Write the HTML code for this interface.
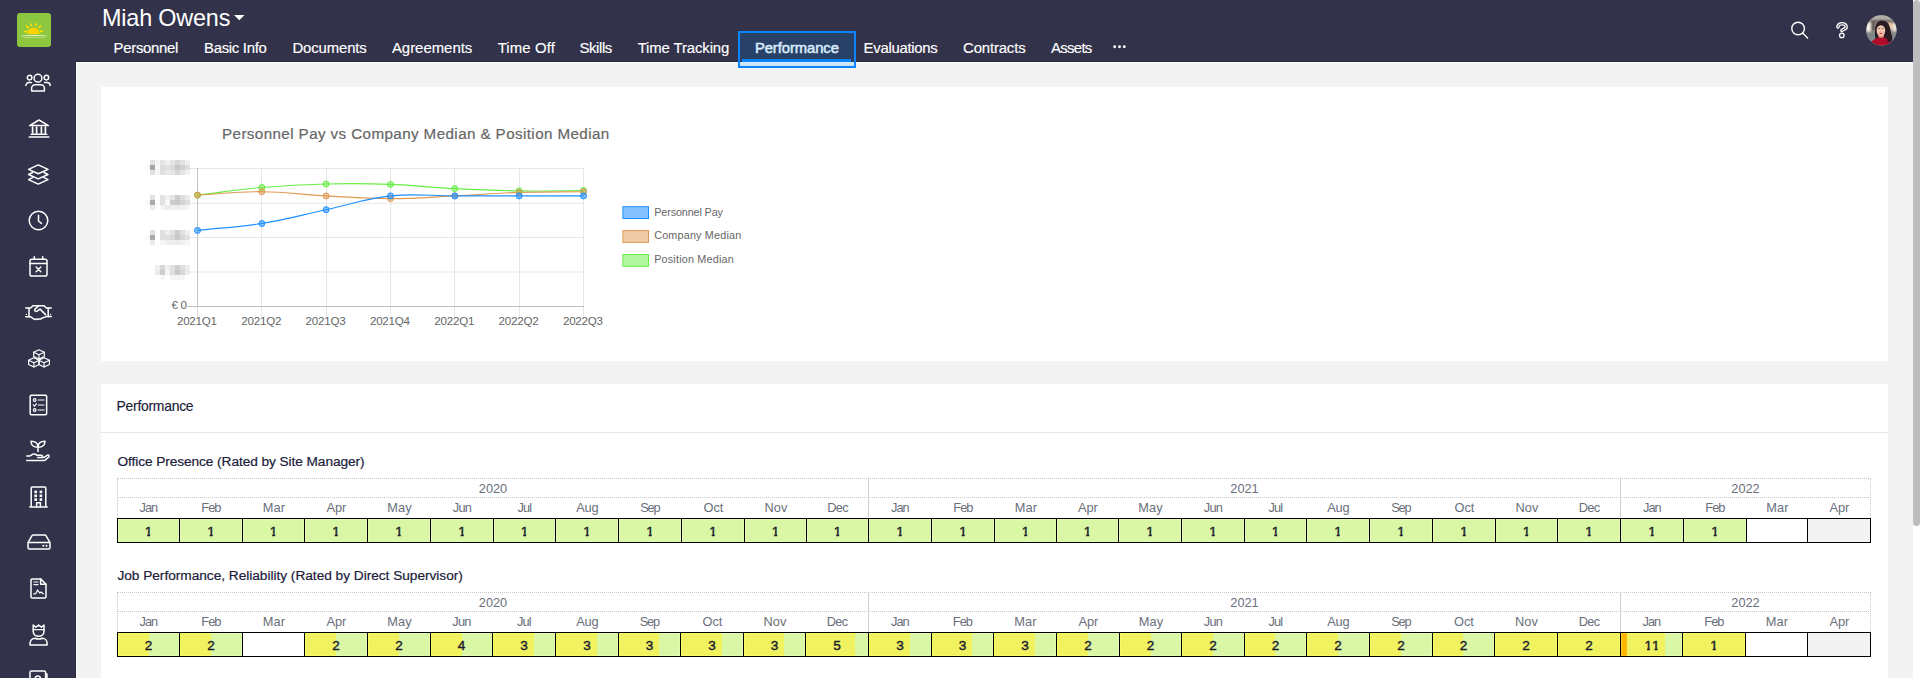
<!DOCTYPE html>
<html lang="en"><head><meta charset="utf-8"><title>Miah Owens - Performance</title>
<style>
html,body{margin:0;padding:0;}
body{width:1920px;height:678px;overflow:hidden;position:relative;background:#f3f3f3;font-family:'Liberation Sans', sans-serif;}
.t{position:absolute;white-space:nowrap;line-height:1em;display:block;}
.abs{position:absolute;}
.o{display:inline-block;font-style:normal;clip-path:polygon(0 0,100% 0,100% 9.3px,5.45px 9.3px,5.45px 100%,2.55px 100%,2.55px 9.3px,0 9.3px);}
#side{left:0;top:0;width:76px;height:678px;background:#32324a;}
#head{left:76px;top:0;width:1837px;height:62px;background:#32324a;}
.card{background:#fff;}
svg{position:absolute;overflow:visible;}
.ic{fill:none;stroke:#fff;stroke-width:1.5;stroke-linecap:round;stroke-linejoin:round;}
</style></head><body>
<div id="frame"><div id="side" class="abs"></div><div id="head" class="abs"></div><div class="abs" style="left:76px;top:62px;width:1px;height:616px;background:#fdfdfd"></div><div class="abs" style="left:76px;top:62px;width:1837px;height:1px;background:#fdfdfd"></div><div class="abs" style="left:75px;top:61px;width:1px;height:617px;background:#2b2b41"></div><div class="abs" style="left:75px;top:61px;width:1838px;height:1px;background:#2b2b41"></div><div class="abs" style="left:1913px;top:0;width:7px;height:678px;background:#fff"></div><div class="abs" style="left:1913px;top:0;width:7px;height:526px;background:#bdbdbd;border-radius:3.5px"></div></div>
<main>
<section id="pay-chart"><div class="abs card" style="left:101px;top:87px;width:1787px;height:274px"></div><svg style="left:0;top:0" width="1920" height="678" viewBox="0 0 1920 678"><path d="M187.5 168.5 H584" stroke="#e6e6e6" stroke-width="1"/><path d="M187.5 203.3 H584" stroke="#e6e6e6" stroke-width="1"/><path d="M187.5 237.5 H584" stroke="#e6e6e6" stroke-width="1"/><path d="M187.5 272 H584" stroke="#e6e6e6" stroke-width="1"/><path d="M197.5 168 V316.5" stroke="#dcdcdc" stroke-width="1"/><path d="M261.5 168 V316.5" stroke="#e6e6e6" stroke-width="1"/><path d="M326.5 168 V316.5" stroke="#e6e6e6" stroke-width="1"/><path d="M390.5 168 V316.5" stroke="#e6e6e6" stroke-width="1"/><path d="M454.5 168 V316.5" stroke="#e6e6e6" stroke-width="1"/><path d="M519.5 168 V316.5" stroke="#e6e6e6" stroke-width="1"/><path d="M583.5 168 V316.5" stroke="#e6e6e6" stroke-width="1"/><path d="M187.5 306.5 H584" stroke="#bfbfbf" stroke-width="1"/><path d="M197.5 168 V306.5" stroke="#c4c4c4" stroke-width="1"/><path d="M197.50 195.10 C223.23 192.06 236.03 189.73 261.83 187.50 C287.50 185.29 300.41 184.62 326.17 184.00 C351.88 183.38 364.79 183.48 390.50 184.40 C416.26 185.32 429.08 187.30 454.83 188.60 C480.55 189.90 493.42 190.52 519.16 190.90 C544.89 191.28 557.76 190.66 583.50 190.50" fill="none" stroke="#66ee44" stroke-width="1.15"/><path d="M197.50 195.10 C223.23 193.74 236.11 191.54 261.83 191.70 C287.58 191.86 300.42 194.52 326.17 195.90 C351.88 197.28 364.77 198.60 390.50 198.60 C416.23 198.60 429.11 197.14 454.83 195.90 C480.57 194.66 493.41 193.24 519.16 192.40 C544.88 191.56 557.76 191.98 583.50 191.70" fill="none" stroke="#e09a55" stroke-width="1.15"/><path d="M197.50 230.40 C223.23 227.64 236.32 227.61 261.83 223.50 C287.78 219.33 300.43 215.22 326.17 209.70 C351.90 204.18 364.48 198.69 390.50 195.90 C415.94 193.17 429.10 195.90 454.83 195.90 C480.57 195.90 493.43 195.90 519.16 195.90 C544.90 195.90 557.76 195.90 583.50 195.90" fill="none" stroke="#1e90ff" stroke-width="1.15"/><circle cx="197.50" cy="195.10" r="3" fill="rgba(102,238,68,0.5)" stroke="#66ee44" stroke-width="1"/><circle cx="261.83" cy="187.50" r="3" fill="rgba(102,238,68,0.5)" stroke="#66ee44" stroke-width="1"/><circle cx="326.17" cy="184.00" r="3" fill="rgba(102,238,68,0.5)" stroke="#66ee44" stroke-width="1"/><circle cx="390.50" cy="184.40" r="3" fill="rgba(102,238,68,0.5)" stroke="#66ee44" stroke-width="1"/><circle cx="454.83" cy="188.60" r="3" fill="rgba(102,238,68,0.5)" stroke="#66ee44" stroke-width="1"/><circle cx="519.16" cy="190.90" r="3" fill="rgba(102,238,68,0.5)" stroke="#66ee44" stroke-width="1"/><circle cx="583.50" cy="190.50" r="3" fill="rgba(102,238,68,0.5)" stroke="#66ee44" stroke-width="1"/><circle cx="197.50" cy="195.10" r="3" fill="rgba(222,150,80,0.5)" stroke="#e09a55" stroke-width="1"/><circle cx="261.83" cy="191.70" r="3" fill="rgba(222,150,80,0.5)" stroke="#e09a55" stroke-width="1"/><circle cx="326.17" cy="195.90" r="3" fill="rgba(222,150,80,0.5)" stroke="#e09a55" stroke-width="1"/><circle cx="390.50" cy="198.60" r="3" fill="rgba(222,150,80,0.5)" stroke="#e09a55" stroke-width="1"/><circle cx="454.83" cy="195.90" r="3" fill="rgba(222,150,80,0.5)" stroke="#e09a55" stroke-width="1"/><circle cx="519.16" cy="192.40" r="3" fill="rgba(222,150,80,0.5)" stroke="#e09a55" stroke-width="1"/><circle cx="583.50" cy="191.70" r="3" fill="rgba(222,150,80,0.5)" stroke="#e09a55" stroke-width="1"/><circle cx="197.50" cy="230.40" r="3" fill="rgba(30,144,255,0.55)" stroke="#1e90ff" stroke-width="1"/><circle cx="261.83" cy="223.50" r="3" fill="rgba(30,144,255,0.55)" stroke="#1e90ff" stroke-width="1"/><circle cx="326.17" cy="209.70" r="3" fill="rgba(30,144,255,0.55)" stroke="#1e90ff" stroke-width="1"/><circle cx="390.50" cy="195.90" r="3" fill="rgba(30,144,255,0.55)" stroke="#1e90ff" stroke-width="1"/><circle cx="454.83" cy="195.90" r="3" fill="rgba(30,144,255,0.55)" stroke="#1e90ff" stroke-width="1"/><circle cx="519.16" cy="195.90" r="3" fill="rgba(30,144,255,0.55)" stroke="#1e90ff" stroke-width="1"/><circle cx="583.50" cy="195.90" r="3" fill="rgba(30,144,255,0.55)" stroke="#1e90ff" stroke-width="1"/><rect x="622.9" y="206.7" width="25.6" height="11.8" fill="rgba(30,144,255,0.55)" stroke="#1e90ff" stroke-width="1"/><rect x="622.9" y="230.6" width="25.6" height="11.8" fill="rgba(222,150,80,0.5)" stroke="#e09a55" stroke-width="1"/><rect x="622.9" y="254.5" width="25.6" height="11.8" fill="rgba(102,238,68,0.5)" stroke="#66ee44" stroke-width="1"/><rect x="150" y="160" width="5" height="5" fill="rgb(225,225,225)"/><rect x="155" y="160" width="5" height="5" fill="rgb(245,245,245)"/><rect x="160" y="160" width="5" height="5" fill="rgb(228,228,228)"/><rect x="165" y="160" width="5" height="5" fill="rgb(240,240,240)"/><rect x="170" y="160" width="5" height="5" fill="rgb(228,228,228)"/><rect x="175" y="160" width="5" height="5" fill="rgb(215,215,215)"/><rect x="180" y="160" width="5" height="5" fill="rgb(225,225,225)"/><rect x="185" y="160" width="5" height="5" fill="rgb(240,240,240)"/><rect x="145" y="165" width="5" height="5" fill="rgb(248,248,248)"/><rect x="150" y="165" width="5" height="5" fill="rgb(165,165,165)"/><rect x="155" y="165" width="5" height="5" fill="rgb(248,248,248)"/><rect x="160" y="165" width="5" height="5" fill="rgb(222,222,222)"/><rect x="165" y="165" width="5" height="5" fill="rgb(225,225,225)"/><rect x="170" y="165" width="5" height="5" fill="rgb(218,218,218)"/><rect x="175" y="165" width="5" height="5" fill="rgb(200,200,200)"/><rect x="180" y="165" width="5" height="5" fill="rgb(210,210,210)"/><rect x="185" y="165" width="5" height="5" fill="rgb(222,222,222)"/><rect x="150" y="170" width="5" height="5" fill="rgb(225,225,225)"/><rect x="155" y="170" width="5" height="5" fill="rgb(245,245,245)"/><rect x="160" y="170" width="5" height="5" fill="rgb(225,225,225)"/><rect x="165" y="170" width="5" height="5" fill="rgb(232,232,232)"/><rect x="170" y="170" width="5" height="5" fill="rgb(230,230,230)"/><rect x="175" y="170" width="5" height="5" fill="rgb(215,215,215)"/><rect x="180" y="170" width="5" height="5" fill="rgb(228,228,228)"/><rect x="185" y="170" width="5" height="5" fill="rgb(240,240,240)"/><rect x="150" y="195" width="5" height="5" fill="rgb(225,225,225)"/><rect x="160" y="195" width="5" height="5" fill="rgb(225,225,225)"/><rect x="165" y="195" width="5" height="5" fill="rgb(240,240,240)"/><rect x="170" y="195" width="5" height="5" fill="rgb(228,228,228)"/><rect x="175" y="195" width="5" height="5" fill="rgb(205,205,205)"/><rect x="180" y="195" width="5" height="5" fill="rgb(222,222,222)"/><rect x="185" y="195" width="5" height="5" fill="rgb(235,235,235)"/><rect x="145" y="200" width="5" height="5" fill="rgb(248,248,248)"/><rect x="150" y="200" width="5" height="5" fill="rgb(170,170,170)"/><rect x="155" y="200" width="5" height="5" fill="rgb(250,250,250)"/><rect x="160" y="200" width="5" height="5" fill="rgb(225,225,225)"/><rect x="165" y="200" width="5" height="5" fill="rgb(248,248,248)"/><rect x="170" y="200" width="5" height="5" fill="rgb(205,205,205)"/><rect x="175" y="200" width="5" height="5" fill="rgb(200,200,200)"/><rect x="180" y="200" width="5" height="5" fill="rgb(212,212,212)"/><rect x="185" y="200" width="5" height="5" fill="rgb(222,222,222)"/><rect x="150" y="205" width="5" height="5" fill="rgb(235,235,235)"/><rect x="160" y="205" width="5" height="5" fill="rgb(245,245,245)"/><rect x="165" y="205" width="5" height="5" fill="rgb(235,235,235)"/><rect x="170" y="205" width="5" height="5" fill="rgb(240,240,240)"/><rect x="175" y="205" width="5" height="5" fill="rgb(238,238,238)"/><rect x="180" y="205" width="5" height="5" fill="rgb(240,240,240)"/><rect x="185" y="205" width="5" height="5" fill="rgb(245,245,245)"/><rect x="150" y="230" width="5" height="5" fill="rgb(225,225,225)"/><rect x="160" y="230" width="5" height="5" fill="rgb(225,225,225)"/><rect x="165" y="230" width="5" height="5" fill="rgb(238,238,238)"/><rect x="170" y="230" width="5" height="5" fill="rgb(225,225,225)"/><rect x="175" y="230" width="5" height="5" fill="rgb(205,205,205)"/><rect x="180" y="230" width="5" height="5" fill="rgb(225,225,225)"/><rect x="185" y="230" width="5" height="5" fill="rgb(238,238,238)"/><rect x="145" y="235" width="5" height="5" fill="rgb(248,248,248)"/><rect x="150" y="235" width="5" height="5" fill="rgb(170,170,170)"/><rect x="160" y="235" width="5" height="5" fill="rgb(222,222,222)"/><rect x="165" y="235" width="5" height="5" fill="rgb(222,222,222)"/><rect x="170" y="235" width="5" height="5" fill="rgb(215,215,215)"/><rect x="175" y="235" width="5" height="5" fill="rgb(200,200,200)"/><rect x="180" y="235" width="5" height="5" fill="rgb(215,215,215)"/><rect x="185" y="235" width="5" height="5" fill="rgb(225,225,225)"/><rect x="150" y="240" width="5" height="5" fill="rgb(235,235,235)"/><rect x="160" y="240" width="5" height="5" fill="rgb(245,245,245)"/><rect x="165" y="240" width="5" height="5" fill="rgb(238,238,238)"/><rect x="170" y="240" width="5" height="5" fill="rgb(238,238,238)"/><rect x="175" y="240" width="5" height="5" fill="rgb(235,235,235)"/><rect x="180" y="240" width="5" height="5" fill="rgb(240,240,240)"/><rect x="185" y="240" width="5" height="5" fill="rgb(245,245,245)"/><rect x="155" y="265" width="5" height="5" fill="rgb(240,240,240)"/><rect x="160" y="265" width="5" height="5" fill="rgb(215,215,215)"/><rect x="165" y="265" width="5" height="5" fill="rgb(240,240,240)"/><rect x="170" y="265" width="5" height="5" fill="rgb(225,225,225)"/><rect x="175" y="265" width="5" height="5" fill="rgb(205,205,205)"/><rect x="180" y="265" width="5" height="5" fill="rgb(222,222,222)"/><rect x="185" y="265" width="5" height="5" fill="rgb(238,238,238)"/><rect x="155" y="270" width="5" height="5" fill="rgb(235,235,235)"/><rect x="160" y="270" width="5" height="5" fill="rgb(205,205,205)"/><rect x="165" y="270" width="5" height="5" fill="rgb(245,245,245)"/><rect x="170" y="270" width="5" height="5" fill="rgb(222,222,222)"/><rect x="175" y="270" width="5" height="5" fill="rgb(200,200,200)"/><rect x="180" y="270" width="5" height="5" fill="rgb(215,215,215)"/><rect x="185" y="270" width="5" height="5" fill="rgb(235,235,235)"/><rect x="160" y="275" width="5" height="5" fill="rgb(248,248,248)"/><rect x="170" y="275" width="5" height="5" fill="rgb(246,246,246)"/><rect x="175" y="275" width="5" height="5" fill="rgb(244,244,244)"/><rect x="180" y="275" width="5" height="5" fill="rgb(246,246,246)"/></svg><span class="t" style="left:222.00px;top:126.00px;font-size:15.2px;color:#666;letter-spacing:0.400px;-webkit-text-stroke:0.2px #666;">Personnel Pay vs Company Median &amp; Position Median</span><span class="t" style="left:176.95px;top:315.00px;font-size:11.6px;color:#666;letter-spacing:-0.233px;">2021Q1</span><span class="t" style="left:241.28px;top:315.00px;font-size:11.6px;color:#666;letter-spacing:-0.233px;">2021Q2</span><span class="t" style="left:305.62px;top:315.00px;font-size:11.6px;color:#666;letter-spacing:-0.233px;">2021Q3</span><span class="t" style="left:369.95px;top:315.00px;font-size:11.6px;color:#666;letter-spacing:-0.233px;">2021Q4</span><span class="t" style="left:434.28px;top:315.00px;font-size:11.6px;color:#666;letter-spacing:-0.233px;">2022Q1</span><span class="t" style="left:498.61px;top:315.00px;font-size:11.6px;color:#666;letter-spacing:-0.233px;">2022Q2</span><span class="t" style="left:562.95px;top:315.00px;font-size:11.6px;color:#666;letter-spacing:-0.233px;">2022Q3</span><span class="t" style="left:171.40px;top:299.00px;font-size:11.6px;color:#666;letter-spacing:-0.263px;">€ 0</span><span class="t" style="left:654.20px;top:207.00px;font-size:10.8px;color:#666;letter-spacing:-0.120px;">Personnel Pay</span><span class="t" style="left:654.20px;top:230.00px;font-size:10.8px;color:#666;letter-spacing:0.183px;">Company Median</span><span class="t" style="left:654.20px;top:254.00px;font-size:10.8px;color:#666;letter-spacing:0.191px;">Position Median</span></section>
<section id="performance"><div class="abs card" style="left:101px;top:384px;width:1787px;height:300px"></div><div class="abs" style="left:101px;top:432px;width:1787px;height:1px;background:#e3e6ea"></div><span class="t" style="left:116.50px;top:400.00px;font-size:13.9px;color:#20203a;letter-spacing:-0.243px;-webkit-text-stroke:0.15px #20203a;">Performance</span><span class="t" style="left:117.40px;top:455.00px;font-size:13.7px;color:#20203a;letter-spacing:-0.075px;-webkit-text-stroke:0.2px #20203a;">Office Presence (Rated by Site Manager)</span><div class="abs" style="left:117px;top:478px;width:1754px;height:0;border-top:1px dotted #c8c8c8"></div><div class="abs" style="left:117px;top:497px;width:1754px;height:0;border-top:1px dotted #c8c8c8"></div><div class="abs" style="left:117px;top:478px;width:0;height:40px;border-left:1px dotted #c8c8c8"></div><div class="abs" style="left:1870px;top:478px;width:0;height:40px;border-left:1px dotted #c8c8c8"></div><div class="abs" style="left:868px;top:478px;width:1px;height:40px;background:#cfcfcf"></div><div class="abs" style="left:1620px;top:478px;width:1px;height:40px;background:#cfcfcf"></div><span class="t" style="left:478.77px;top:483.00px;font-size:12.8px;color:#6a6f7c;">2020</span><span class="t" style="left:1230.27px;top:483.00px;font-size:12.8px;color:#6a6f7c;">2021</span><span class="t" style="left:1731.27px;top:483.00px;font-size:12.8px;color:#6a6f7c;">2022</span><span class="t" style="left:139.60px;top:502.00px;font-size:12.8px;color:#6a6f7c;letter-spacing:-1.020px;">Jan</span><span class="t" style="left:201.30px;top:502.00px;font-size:12.8px;color:#6a6f7c;letter-spacing:-0.931px;">Feb</span><span class="t" style="left:262.65px;top:502.00px;font-size:12.8px;color:#6a6f7c;letter-spacing:0.227px;">Mar</span><span class="t" style="left:326.40px;top:502.00px;font-size:12.8px;color:#6a6f7c;letter-spacing:0.039px;">Apr</span><span class="t" style="left:387.20px;top:502.00px;font-size:12.8px;color:#6a6f7c;letter-spacing:0.106px;">May</span><span class="t" style="left:452.80px;top:502.00px;font-size:12.8px;color:#6a6f7c;letter-spacing:-0.720px;">Jun</span><span class="t" style="left:517.60px;top:502.00px;font-size:12.8px;color:#6a6f7c;letter-spacing:-0.880px;">Jul</span><span class="t" style="left:576.15px;top:502.00px;font-size:12.8px;color:#6a6f7c;letter-spacing:-0.141px;">Aug</span><span class="t" style="left:640.15px;top:502.00px;font-size:12.8px;color:#6a6f7c;letter-spacing:-1.141px;">Sep</span><span class="t" style="left:703.55px;top:502.00px;font-size:12.8px;color:#6a6f7c;letter-spacing:-0.111px;">Oct</span><span class="t" style="left:764.50px;top:502.00px;font-size:12.8px;color:#6a6f7c;letter-spacing:0.017px;">Nov</span><span class="t" style="left:827.25px;top:502.00px;font-size:12.8px;color:#6a6f7c;letter-spacing:-0.733px;">Dec</span><span class="t" style="left:891.10px;top:502.00px;font-size:12.8px;color:#6a6f7c;letter-spacing:-1.020px;">Jan</span><span class="t" style="left:953.30px;top:502.00px;font-size:12.8px;color:#6a6f7c;letter-spacing:-0.931px;">Feb</span><span class="t" style="left:1014.65px;top:502.00px;font-size:12.8px;color:#6a6f7c;letter-spacing:0.227px;">Mar</span><span class="t" style="left:1077.90px;top:502.00px;font-size:12.8px;color:#6a6f7c;letter-spacing:0.039px;">Apr</span><span class="t" style="left:1138.20px;top:502.00px;font-size:12.8px;color:#6a6f7c;letter-spacing:0.106px;">May</span><span class="t" style="left:1203.80px;top:502.00px;font-size:12.8px;color:#6a6f7c;letter-spacing:-0.720px;">Jun</span><span class="t" style="left:1268.60px;top:502.00px;font-size:12.8px;color:#6a6f7c;letter-spacing:-0.880px;">Jul</span><span class="t" style="left:1327.15px;top:502.00px;font-size:12.8px;color:#6a6f7c;letter-spacing:-0.141px;">Aug</span><span class="t" style="left:1391.15px;top:502.00px;font-size:12.8px;color:#6a6f7c;letter-spacing:-1.141px;">Sep</span><span class="t" style="left:1454.55px;top:502.00px;font-size:12.8px;color:#6a6f7c;letter-spacing:-0.111px;">Oct</span><span class="t" style="left:1515.50px;top:502.00px;font-size:12.8px;color:#6a6f7c;letter-spacing:0.017px;">Nov</span><span class="t" style="left:1578.75px;top:502.00px;font-size:12.8px;color:#6a6f7c;letter-spacing:-0.733px;">Dec</span><span class="t" style="left:1643.10px;top:502.00px;font-size:12.8px;color:#6a6f7c;letter-spacing:-1.020px;">Jan</span><span class="t" style="left:1705.30px;top:502.00px;font-size:12.8px;color:#6a6f7c;letter-spacing:-0.931px;">Feb</span><span class="t" style="left:1766.15px;top:502.00px;font-size:12.8px;color:#6a6f7c;letter-spacing:0.227px;">Mar</span><span class="t" style="left:1829.40px;top:502.00px;font-size:12.8px;color:#6a6f7c;letter-spacing:0.039px;">Apr</span><div class="abs" style="left:117px;top:518px;width:1754px;height:25px;background:#000"></div><div class="abs" style="left:118px;top:519px;width:61px;height:23px;background:#e3fab4"><div class="abs" style="left:1px;top:1px;right:1px;bottom:1px;background:#daf7a6"></div></div><span class="t" style="left:144.72px;top:525.00px;font-size:13.6px;color:#1c1c2e;-webkit-text-stroke:0.4px #1c1c2e;"><i class="o">1</i></span><div class="abs" style="left:180px;top:519px;width:62px;height:23px;background:#e3fab4"><div class="abs" style="left:1px;top:1px;right:1px;bottom:1px;background:#daf7a6"></div></div><span class="t" style="left:207.22px;top:525.00px;font-size:13.6px;color:#1c1c2e;-webkit-text-stroke:0.4px #1c1c2e;"><i class="o">1</i></span><div class="abs" style="left:243px;top:519px;width:61px;height:23px;background:#e3fab4"><div class="abs" style="left:1px;top:1px;right:1px;bottom:1px;background:#daf7a6"></div></div><span class="t" style="left:269.72px;top:525.00px;font-size:13.6px;color:#1c1c2e;-webkit-text-stroke:0.4px #1c1c2e;"><i class="o">1</i></span><div class="abs" style="left:305px;top:519px;width:62px;height:23px;background:#e3fab4"><div class="abs" style="left:1px;top:1px;right:1px;bottom:1px;background:#daf7a6"></div></div><span class="t" style="left:332.22px;top:525.00px;font-size:13.6px;color:#1c1c2e;-webkit-text-stroke:0.4px #1c1c2e;"><i class="o">1</i></span><div class="abs" style="left:368px;top:519px;width:62px;height:23px;background:#e3fab4"><div class="abs" style="left:1px;top:1px;right:1px;bottom:1px;background:#daf7a6"></div></div><span class="t" style="left:395.22px;top:525.00px;font-size:13.6px;color:#1c1c2e;-webkit-text-stroke:0.4px #1c1c2e;"><i class="o">1</i></span><div class="abs" style="left:431px;top:519px;width:62px;height:23px;background:#e3fab4"><div class="abs" style="left:1px;top:1px;right:1px;bottom:1px;background:#daf7a6"></div></div><span class="t" style="left:458.22px;top:525.00px;font-size:13.6px;color:#1c1c2e;-webkit-text-stroke:0.4px #1c1c2e;"><i class="o">1</i></span><div class="abs" style="left:494px;top:519px;width:61px;height:23px;background:#e3fab4"><div class="abs" style="left:1px;top:1px;right:1px;bottom:1px;background:#daf7a6"></div></div><span class="t" style="left:520.72px;top:525.00px;font-size:13.6px;color:#1c1c2e;-webkit-text-stroke:0.4px #1c1c2e;"><i class="o">1</i></span><div class="abs" style="left:556px;top:519px;width:62px;height:23px;background:#e3fab4"><div class="abs" style="left:1px;top:1px;right:1px;bottom:1px;background:#daf7a6"></div></div><span class="t" style="left:583.22px;top:525.00px;font-size:13.6px;color:#1c1c2e;-webkit-text-stroke:0.4px #1c1c2e;"><i class="o">1</i></span><div class="abs" style="left:619px;top:519px;width:62px;height:23px;background:#e3fab4"><div class="abs" style="left:1px;top:1px;right:1px;bottom:1px;background:#daf7a6"></div></div><span class="t" style="left:646.22px;top:525.00px;font-size:13.6px;color:#1c1c2e;-webkit-text-stroke:0.4px #1c1c2e;"><i class="o">1</i></span><div class="abs" style="left:682px;top:519px;width:62px;height:23px;background:#e3fab4"><div class="abs" style="left:1px;top:1px;right:1px;bottom:1px;background:#daf7a6"></div></div><span class="t" style="left:709.22px;top:525.00px;font-size:13.6px;color:#1c1c2e;-webkit-text-stroke:0.4px #1c1c2e;"><i class="o">1</i></span><div class="abs" style="left:745px;top:519px;width:61px;height:23px;background:#e3fab4"><div class="abs" style="left:1px;top:1px;right:1px;bottom:1px;background:#daf7a6"></div></div><span class="t" style="left:771.72px;top:525.00px;font-size:13.6px;color:#1c1c2e;-webkit-text-stroke:0.4px #1c1c2e;"><i class="o">1</i></span><div class="abs" style="left:807px;top:519px;width:61px;height:23px;background:#e3fab4"><div class="abs" style="left:1px;top:1px;right:1px;bottom:1px;background:#daf7a6"></div></div><span class="t" style="left:833.72px;top:525.00px;font-size:13.6px;color:#1c1c2e;-webkit-text-stroke:0.4px #1c1c2e;"><i class="o">1</i></span><div class="abs" style="left:869px;top:519px;width:62px;height:23px;background:#e3fab4"><div class="abs" style="left:1px;top:1px;right:1px;bottom:1px;background:#daf7a6"></div></div><span class="t" style="left:896.22px;top:525.00px;font-size:13.6px;color:#1c1c2e;-webkit-text-stroke:0.4px #1c1c2e;"><i class="o">1</i></span><div class="abs" style="left:932px;top:519px;width:62px;height:23px;background:#e3fab4"><div class="abs" style="left:1px;top:1px;right:1px;bottom:1px;background:#daf7a6"></div></div><span class="t" style="left:959.22px;top:525.00px;font-size:13.6px;color:#1c1c2e;-webkit-text-stroke:0.4px #1c1c2e;"><i class="o">1</i></span><div class="abs" style="left:995px;top:519px;width:61px;height:23px;background:#e3fab4"><div class="abs" style="left:1px;top:1px;right:1px;bottom:1px;background:#daf7a6"></div></div><span class="t" style="left:1021.72px;top:525.00px;font-size:13.6px;color:#1c1c2e;-webkit-text-stroke:0.4px #1c1c2e;"><i class="o">1</i></span><div class="abs" style="left:1057px;top:519px;width:61px;height:23px;background:#e3fab4"><div class="abs" style="left:1px;top:1px;right:1px;bottom:1px;background:#daf7a6"></div></div><span class="t" style="left:1083.72px;top:525.00px;font-size:13.6px;color:#1c1c2e;-webkit-text-stroke:0.4px #1c1c2e;"><i class="o">1</i></span><div class="abs" style="left:1119px;top:519px;width:62px;height:23px;background:#e3fab4"><div class="abs" style="left:1px;top:1px;right:1px;bottom:1px;background:#daf7a6"></div></div><span class="t" style="left:1146.22px;top:525.00px;font-size:13.6px;color:#1c1c2e;-webkit-text-stroke:0.4px #1c1c2e;"><i class="o">1</i></span><div class="abs" style="left:1182px;top:519px;width:62px;height:23px;background:#e3fab4"><div class="abs" style="left:1px;top:1px;right:1px;bottom:1px;background:#daf7a6"></div></div><span class="t" style="left:1209.22px;top:525.00px;font-size:13.6px;color:#1c1c2e;-webkit-text-stroke:0.4px #1c1c2e;"><i class="o">1</i></span><div class="abs" style="left:1245px;top:519px;width:61px;height:23px;background:#e3fab4"><div class="abs" style="left:1px;top:1px;right:1px;bottom:1px;background:#daf7a6"></div></div><span class="t" style="left:1271.72px;top:525.00px;font-size:13.6px;color:#1c1c2e;-webkit-text-stroke:0.4px #1c1c2e;"><i class="o">1</i></span><div class="abs" style="left:1307px;top:519px;width:62px;height:23px;background:#e3fab4"><div class="abs" style="left:1px;top:1px;right:1px;bottom:1px;background:#daf7a6"></div></div><span class="t" style="left:1334.22px;top:525.00px;font-size:13.6px;color:#1c1c2e;-webkit-text-stroke:0.4px #1c1c2e;"><i class="o">1</i></span><div class="abs" style="left:1370px;top:519px;width:62px;height:23px;background:#e3fab4"><div class="abs" style="left:1px;top:1px;right:1px;bottom:1px;background:#daf7a6"></div></div><span class="t" style="left:1397.22px;top:525.00px;font-size:13.6px;color:#1c1c2e;-webkit-text-stroke:0.4px #1c1c2e;"><i class="o">1</i></span><div class="abs" style="left:1433px;top:519px;width:62px;height:23px;background:#e3fab4"><div class="abs" style="left:1px;top:1px;right:1px;bottom:1px;background:#daf7a6"></div></div><span class="t" style="left:1460.22px;top:525.00px;font-size:13.6px;color:#1c1c2e;-webkit-text-stroke:0.4px #1c1c2e;"><i class="o">1</i></span><div class="abs" style="left:1496px;top:519px;width:61px;height:23px;background:#e3fab4"><div class="abs" style="left:1px;top:1px;right:1px;bottom:1px;background:#daf7a6"></div></div><span class="t" style="left:1522.72px;top:525.00px;font-size:13.6px;color:#1c1c2e;-webkit-text-stroke:0.4px #1c1c2e;"><i class="o">1</i></span><div class="abs" style="left:1558px;top:519px;width:62px;height:23px;background:#e3fab4"><div class="abs" style="left:1px;top:1px;right:1px;bottom:1px;background:#daf7a6"></div></div><span class="t" style="left:1585.22px;top:525.00px;font-size:13.6px;color:#1c1c2e;-webkit-text-stroke:0.4px #1c1c2e;"><i class="o">1</i></span><div class="abs" style="left:1621px;top:519px;width:62px;height:23px;background:#e3fab4"><div class="abs" style="left:1px;top:1px;right:1px;bottom:1px;background:#daf7a6"></div></div><span class="t" style="left:1648.22px;top:525.00px;font-size:13.6px;color:#1c1c2e;-webkit-text-stroke:0.4px #1c1c2e;"><i class="o">1</i></span><div class="abs" style="left:1684px;top:519px;width:62px;height:23px;background:#e3fab4"><div class="abs" style="left:1px;top:1px;right:1px;bottom:1px;background:#daf7a6"></div></div><span class="t" style="left:1711.22px;top:525.00px;font-size:13.6px;color:#1c1c2e;-webkit-text-stroke:0.4px #1c1c2e;"><i class="o">1</i></span><div class="abs" style="left:1747px;top:519px;width:60px;height:23px;background:#fff"></div><div class="abs" style="left:1808px;top:519px;width:62px;height:23px;background:#f3f3f3"></div><span class="t" style="left:117.40px;top:569.00px;font-size:13.7px;color:#20203a;letter-spacing:-0.025px;-webkit-text-stroke:0.2px #20203a;">Job Performance, Reliability (Rated by Direct Supervisor)</span><div class="abs" style="left:117px;top:592px;width:1754px;height:0;border-top:1px dotted #c8c8c8"></div><div class="abs" style="left:117px;top:611px;width:1754px;height:0;border-top:1px dotted #c8c8c8"></div><div class="abs" style="left:117px;top:592px;width:0;height:40px;border-left:1px dotted #c8c8c8"></div><div class="abs" style="left:1870px;top:592px;width:0;height:40px;border-left:1px dotted #c8c8c8"></div><div class="abs" style="left:868px;top:592px;width:1px;height:40px;background:#cfcfcf"></div><div class="abs" style="left:1620px;top:592px;width:1px;height:40px;background:#cfcfcf"></div><span class="t" style="left:478.77px;top:597.00px;font-size:12.8px;color:#6a6f7c;">2020</span><span class="t" style="left:1230.27px;top:597.00px;font-size:12.8px;color:#6a6f7c;">2021</span><span class="t" style="left:1731.27px;top:597.00px;font-size:12.8px;color:#6a6f7c;">2022</span><span class="t" style="left:139.60px;top:616.00px;font-size:12.8px;color:#6a6f7c;letter-spacing:-1.020px;">Jan</span><span class="t" style="left:201.30px;top:616.00px;font-size:12.8px;color:#6a6f7c;letter-spacing:-0.931px;">Feb</span><span class="t" style="left:262.65px;top:616.00px;font-size:12.8px;color:#6a6f7c;letter-spacing:0.227px;">Mar</span><span class="t" style="left:326.40px;top:616.00px;font-size:12.8px;color:#6a6f7c;letter-spacing:0.039px;">Apr</span><span class="t" style="left:387.20px;top:616.00px;font-size:12.8px;color:#6a6f7c;letter-spacing:0.106px;">May</span><span class="t" style="left:452.30px;top:616.00px;font-size:12.8px;color:#6a6f7c;letter-spacing:-0.720px;">Jun</span><span class="t" style="left:517.10px;top:616.00px;font-size:12.8px;color:#6a6f7c;letter-spacing:-0.880px;">Jul</span><span class="t" style="left:576.15px;top:616.00px;font-size:12.8px;color:#6a6f7c;letter-spacing:-0.141px;">Aug</span><span class="t" style="left:639.65px;top:616.00px;font-size:12.8px;color:#6a6f7c;letter-spacing:-1.141px;">Sep</span><span class="t" style="left:702.55px;top:616.00px;font-size:12.8px;color:#6a6f7c;letter-spacing:-0.111px;">Oct</span><span class="t" style="left:763.50px;top:616.00px;font-size:12.8px;color:#6a6f7c;letter-spacing:0.017px;">Nov</span><span class="t" style="left:826.75px;top:616.00px;font-size:12.8px;color:#6a6f7c;letter-spacing:-0.733px;">Dec</span><span class="t" style="left:891.10px;top:616.00px;font-size:12.8px;color:#6a6f7c;letter-spacing:-1.020px;">Jan</span><span class="t" style="left:952.80px;top:616.00px;font-size:12.8px;color:#6a6f7c;letter-spacing:-0.931px;">Feb</span><span class="t" style="left:1014.15px;top:616.00px;font-size:12.8px;color:#6a6f7c;letter-spacing:0.227px;">Mar</span><span class="t" style="left:1078.40px;top:616.00px;font-size:12.8px;color:#6a6f7c;letter-spacing:0.039px;">Apr</span><span class="t" style="left:1138.70px;top:616.00px;font-size:12.8px;color:#6a6f7c;letter-spacing:0.106px;">May</span><span class="t" style="left:1203.80px;top:616.00px;font-size:12.8px;color:#6a6f7c;letter-spacing:-0.720px;">Jun</span><span class="t" style="left:1268.60px;top:616.00px;font-size:12.8px;color:#6a6f7c;letter-spacing:-0.880px;">Jul</span><span class="t" style="left:1327.15px;top:616.00px;font-size:12.8px;color:#6a6f7c;letter-spacing:-0.141px;">Aug</span><span class="t" style="left:1391.15px;top:616.00px;font-size:12.8px;color:#6a6f7c;letter-spacing:-1.141px;">Sep</span><span class="t" style="left:1454.05px;top:616.00px;font-size:12.8px;color:#6a6f7c;letter-spacing:-0.111px;">Oct</span><span class="t" style="left:1515.00px;top:616.00px;font-size:12.8px;color:#6a6f7c;letter-spacing:0.017px;">Nov</span><span class="t" style="left:1578.75px;top:616.00px;font-size:12.8px;color:#6a6f7c;letter-spacing:-0.733px;">Dec</span><span class="t" style="left:1642.60px;top:616.00px;font-size:12.8px;color:#6a6f7c;letter-spacing:-1.020px;">Jan</span><span class="t" style="left:1704.30px;top:616.00px;font-size:12.8px;color:#6a6f7c;letter-spacing:-0.931px;">Feb</span><span class="t" style="left:1765.65px;top:616.00px;font-size:12.8px;color:#6a6f7c;letter-spacing:0.227px;">Mar</span><span class="t" style="left:1829.40px;top:616.00px;font-size:12.8px;color:#6a6f7c;letter-spacing:0.039px;">Apr</span><div class="abs" style="left:117px;top:632px;width:1754px;height:25px;background:#000"></div><div class="abs" style="left:118px;top:633px;width:61px;height:23px;background:linear-gradient(90deg,#f9fa63 0.00%,#f9fa63 50.00%,#e3fab4 50.00%,#e3fab4 100.00%)"><div class="abs" style="left:1px;top:1px;right:1px;bottom:1px;background:linear-gradient(90deg,#f0f35f 0.00%,#f0f35f 50.00%,#daf7a6 50.00%,#daf7a6 100.00%)"></div></div><span class="t" style="left:144.72px;top:639.00px;font-size:13.6px;color:#1c1c2e;-webkit-text-stroke:0.4px #1c1c2e;">2</span><div class="abs" style="left:180px;top:633px;width:62px;height:23px;background:linear-gradient(90deg,#f9fa63 0.00%,#f9fa63 50.00%,#e3fab4 50.00%,#e3fab4 100.00%)"><div class="abs" style="left:1px;top:1px;right:1px;bottom:1px;background:linear-gradient(90deg,#f0f35f 0.00%,#f0f35f 50.00%,#daf7a6 50.00%,#daf7a6 100.00%)"></div></div><span class="t" style="left:207.22px;top:639.00px;font-size:13.6px;color:#1c1c2e;-webkit-text-stroke:0.4px #1c1c2e;">2</span><div class="abs" style="left:243px;top:633px;width:61px;height:23px;background:#fff"></div><div class="abs" style="left:305px;top:633px;width:62px;height:23px;background:linear-gradient(90deg,#f9fa63 0.00%,#f9fa63 50.00%,#e3fab4 50.00%,#e3fab4 100.00%)"><div class="abs" style="left:1px;top:1px;right:1px;bottom:1px;background:linear-gradient(90deg,#f0f35f 0.00%,#f0f35f 50.00%,#daf7a6 50.00%,#daf7a6 100.00%)"></div></div><span class="t" style="left:332.22px;top:639.00px;font-size:13.6px;color:#1c1c2e;-webkit-text-stroke:0.4px #1c1c2e;">2</span><div class="abs" style="left:368px;top:633px;width:62px;height:23px;background:linear-gradient(90deg,#f9fa63 0.00%,#f9fa63 50.00%,#e3fab4 50.00%,#e3fab4 100.00%)"><div class="abs" style="left:1px;top:1px;right:1px;bottom:1px;background:linear-gradient(90deg,#f0f35f 0.00%,#f0f35f 50.00%,#daf7a6 50.00%,#daf7a6 100.00%)"></div></div><span class="t" style="left:395.22px;top:639.00px;font-size:13.6px;color:#1c1c2e;-webkit-text-stroke:0.4px #1c1c2e;">2</span><div class="abs" style="left:431px;top:633px;width:61px;height:23px;background:linear-gradient(90deg,#f9fa63 0.00%,#f9fa63 50.00%,#e3fab4 50.00%,#e3fab4 100.00%)"><div class="abs" style="left:1px;top:1px;right:1px;bottom:1px;background:linear-gradient(90deg,#f0f35f 0.00%,#f0f35f 50.00%,#daf7a6 50.00%,#daf7a6 100.00%)"></div></div><span class="t" style="left:457.72px;top:639.00px;font-size:13.6px;color:#1c1c2e;-webkit-text-stroke:0.4px #1c1c2e;">4</span><div class="abs" style="left:493px;top:633px;width:62px;height:23px;background:linear-gradient(90deg,#f9fa63 0.00%,#f9fa63 66.67%,#e3fab4 66.67%,#e3fab4 100.00%)"><div class="abs" style="left:1px;top:1px;right:1px;bottom:1px;background:linear-gradient(90deg,#f0f35f 0.00%,#f0f35f 66.67%,#daf7a6 66.67%,#daf7a6 100.00%)"></div></div><span class="t" style="left:520.22px;top:639.00px;font-size:13.6px;color:#1c1c2e;-webkit-text-stroke:0.4px #1c1c2e;">3</span><div class="abs" style="left:556px;top:633px;width:62px;height:23px;background:linear-gradient(90deg,#f9fa63 0.00%,#f9fa63 66.67%,#e3fab4 66.67%,#e3fab4 100.00%)"><div class="abs" style="left:1px;top:1px;right:1px;bottom:1px;background:linear-gradient(90deg,#f0f35f 0.00%,#f0f35f 66.67%,#daf7a6 66.67%,#daf7a6 100.00%)"></div></div><span class="t" style="left:583.22px;top:639.00px;font-size:13.6px;color:#1c1c2e;-webkit-text-stroke:0.4px #1c1c2e;">3</span><div class="abs" style="left:619px;top:633px;width:61px;height:23px;background:linear-gradient(90deg,#f9fa63 0.00%,#f9fa63 66.67%,#e3fab4 66.67%,#e3fab4 100.00%)"><div class="abs" style="left:1px;top:1px;right:1px;bottom:1px;background:linear-gradient(90deg,#f0f35f 0.00%,#f0f35f 66.67%,#daf7a6 66.67%,#daf7a6 100.00%)"></div></div><span class="t" style="left:645.72px;top:639.00px;font-size:13.6px;color:#1c1c2e;-webkit-text-stroke:0.4px #1c1c2e;">3</span><div class="abs" style="left:681px;top:633px;width:62px;height:23px;background:linear-gradient(90deg,#f9fa63 0.00%,#f9fa63 66.67%,#e3fab4 66.67%,#e3fab4 100.00%)"><div class="abs" style="left:1px;top:1px;right:1px;bottom:1px;background:linear-gradient(90deg,#f0f35f 0.00%,#f0f35f 66.67%,#daf7a6 66.67%,#daf7a6 100.00%)"></div></div><span class="t" style="left:708.22px;top:639.00px;font-size:13.6px;color:#1c1c2e;-webkit-text-stroke:0.4px #1c1c2e;">3</span><div class="abs" style="left:744px;top:633px;width:61px;height:23px;background:linear-gradient(90deg,#f9fa63 0.00%,#f9fa63 66.67%,#e3fab4 66.67%,#e3fab4 100.00%)"><div class="abs" style="left:1px;top:1px;right:1px;bottom:1px;background:linear-gradient(90deg,#f0f35f 0.00%,#f0f35f 66.67%,#daf7a6 66.67%,#daf7a6 100.00%)"></div></div><span class="t" style="left:770.72px;top:639.00px;font-size:13.6px;color:#1c1c2e;-webkit-text-stroke:0.4px #1c1c2e;">3</span><div class="abs" style="left:806px;top:633px;width:62px;height:23px;background:linear-gradient(90deg,#f9fa63 0.00%,#f9fa63 80.00%,#e3fab4 80.00%,#e3fab4 100.00%)"><div class="abs" style="left:1px;top:1px;right:1px;bottom:1px;background:linear-gradient(90deg,#f0f35f 0.00%,#f0f35f 80.00%,#daf7a6 80.00%,#daf7a6 100.00%)"></div></div><span class="t" style="left:833.22px;top:639.00px;font-size:13.6px;color:#1c1c2e;-webkit-text-stroke:0.4px #1c1c2e;">5</span><div class="abs" style="left:869px;top:633px;width:62px;height:23px;background:linear-gradient(90deg,#f9fa63 0.00%,#f9fa63 66.67%,#e3fab4 66.67%,#e3fab4 100.00%)"><div class="abs" style="left:1px;top:1px;right:1px;bottom:1px;background:linear-gradient(90deg,#f0f35f 0.00%,#f0f35f 66.67%,#daf7a6 66.67%,#daf7a6 100.00%)"></div></div><span class="t" style="left:896.22px;top:639.00px;font-size:13.6px;color:#1c1c2e;-webkit-text-stroke:0.4px #1c1c2e;">3</span><div class="abs" style="left:932px;top:633px;width:61px;height:23px;background:linear-gradient(90deg,#f9fa63 0.00%,#f9fa63 66.67%,#e3fab4 66.67%,#e3fab4 100.00%)"><div class="abs" style="left:1px;top:1px;right:1px;bottom:1px;background:linear-gradient(90deg,#f0f35f 0.00%,#f0f35f 66.67%,#daf7a6 66.67%,#daf7a6 100.00%)"></div></div><span class="t" style="left:958.72px;top:639.00px;font-size:13.6px;color:#1c1c2e;-webkit-text-stroke:0.4px #1c1c2e;">3</span><div class="abs" style="left:994px;top:633px;width:62px;height:23px;background:linear-gradient(90deg,#f9fa63 0.00%,#f9fa63 66.67%,#e3fab4 66.67%,#e3fab4 100.00%)"><div class="abs" style="left:1px;top:1px;right:1px;bottom:1px;background:linear-gradient(90deg,#f0f35f 0.00%,#f0f35f 66.67%,#daf7a6 66.67%,#daf7a6 100.00%)"></div></div><span class="t" style="left:1021.22px;top:639.00px;font-size:13.6px;color:#1c1c2e;-webkit-text-stroke:0.4px #1c1c2e;">3</span><div class="abs" style="left:1057px;top:633px;width:62px;height:23px;background:linear-gradient(90deg,#f9fa63 0.00%,#f9fa63 50.00%,#e3fab4 50.00%,#e3fab4 100.00%)"><div class="abs" style="left:1px;top:1px;right:1px;bottom:1px;background:linear-gradient(90deg,#f0f35f 0.00%,#f0f35f 50.00%,#daf7a6 50.00%,#daf7a6 100.00%)"></div></div><span class="t" style="left:1084.22px;top:639.00px;font-size:13.6px;color:#1c1c2e;-webkit-text-stroke:0.4px #1c1c2e;">2</span><div class="abs" style="left:1120px;top:633px;width:61px;height:23px;background:linear-gradient(90deg,#f9fa63 0.00%,#f9fa63 50.00%,#e3fab4 50.00%,#e3fab4 100.00%)"><div class="abs" style="left:1px;top:1px;right:1px;bottom:1px;background:linear-gradient(90deg,#f0f35f 0.00%,#f0f35f 50.00%,#daf7a6 50.00%,#daf7a6 100.00%)"></div></div><span class="t" style="left:1146.72px;top:639.00px;font-size:13.6px;color:#1c1c2e;-webkit-text-stroke:0.4px #1c1c2e;">2</span><div class="abs" style="left:1182px;top:633px;width:62px;height:23px;background:linear-gradient(90deg,#f9fa63 0.00%,#f9fa63 50.00%,#e3fab4 50.00%,#e3fab4 100.00%)"><div class="abs" style="left:1px;top:1px;right:1px;bottom:1px;background:linear-gradient(90deg,#f0f35f 0.00%,#f0f35f 50.00%,#daf7a6 50.00%,#daf7a6 100.00%)"></div></div><span class="t" style="left:1209.22px;top:639.00px;font-size:13.6px;color:#1c1c2e;-webkit-text-stroke:0.4px #1c1c2e;">2</span><div class="abs" style="left:1245px;top:633px;width:61px;height:23px;background:linear-gradient(90deg,#f9fa63 0.00%,#f9fa63 50.00%,#e3fab4 50.00%,#e3fab4 100.00%)"><div class="abs" style="left:1px;top:1px;right:1px;bottom:1px;background:linear-gradient(90deg,#f0f35f 0.00%,#f0f35f 50.00%,#daf7a6 50.00%,#daf7a6 100.00%)"></div></div><span class="t" style="left:1271.72px;top:639.00px;font-size:13.6px;color:#1c1c2e;-webkit-text-stroke:0.4px #1c1c2e;">2</span><div class="abs" style="left:1307px;top:633px;width:62px;height:23px;background:linear-gradient(90deg,#f9fa63 0.00%,#f9fa63 50.00%,#e3fab4 50.00%,#e3fab4 100.00%)"><div class="abs" style="left:1px;top:1px;right:1px;bottom:1px;background:linear-gradient(90deg,#f0f35f 0.00%,#f0f35f 50.00%,#daf7a6 50.00%,#daf7a6 100.00%)"></div></div><span class="t" style="left:1334.22px;top:639.00px;font-size:13.6px;color:#1c1c2e;-webkit-text-stroke:0.4px #1c1c2e;">2</span><div class="abs" style="left:1370px;top:633px;width:62px;height:23px;background:linear-gradient(90deg,#f9fa63 0.00%,#f9fa63 50.00%,#e3fab4 50.00%,#e3fab4 100.00%)"><div class="abs" style="left:1px;top:1px;right:1px;bottom:1px;background:linear-gradient(90deg,#f0f35f 0.00%,#f0f35f 50.00%,#daf7a6 50.00%,#daf7a6 100.00%)"></div></div><span class="t" style="left:1397.22px;top:639.00px;font-size:13.6px;color:#1c1c2e;-webkit-text-stroke:0.4px #1c1c2e;">2</span><div class="abs" style="left:1433px;top:633px;width:61px;height:23px;background:linear-gradient(90deg,#f9fa63 0.00%,#f9fa63 50.00%,#e3fab4 50.00%,#e3fab4 100.00%)"><div class="abs" style="left:1px;top:1px;right:1px;bottom:1px;background:linear-gradient(90deg,#f0f35f 0.00%,#f0f35f 50.00%,#daf7a6 50.00%,#daf7a6 100.00%)"></div></div><span class="t" style="left:1459.72px;top:639.00px;font-size:13.6px;color:#1c1c2e;-webkit-text-stroke:0.4px #1c1c2e;">2</span><div class="abs" style="left:1495px;top:633px;width:62px;height:23px;background:#f9fa63"><div class="abs" style="left:1px;top:1px;right:1px;bottom:1px;background:#f0f35f"></div></div><span class="t" style="left:1522.22px;top:639.00px;font-size:13.6px;color:#1c1c2e;-webkit-text-stroke:0.4px #1c1c2e;">2</span><div class="abs" style="left:1558px;top:633px;width:62px;height:23px;background:#f9fa63"><div class="abs" style="left:1px;top:1px;right:1px;bottom:1px;background:#f0f35f"></div></div><span class="t" style="left:1585.22px;top:639.00px;font-size:13.6px;color:#1c1c2e;-webkit-text-stroke:0.4px #1c1c2e;">2</span><div class="abs" style="left:1621px;top:633px;width:61px;height:23px;background:linear-gradient(90deg,#ffc42e 0.00%,#ffc42e 9.09%,#f9fa63 9.09%,#f9fa63 72.73%,#e3fab4 72.73%,#e3fab4 100.00%)"><div class="abs" style="left:1px;top:1px;right:1px;bottom:1px;background:linear-gradient(90deg,#ffb700 0.00%,#ffb700 9.09%,#f0f35f 9.09%,#f0f35f 72.73%,#daf7a6 72.73%,#daf7a6 100.00%)"></div></div><span class="t" style="left:1644.44px;top:639.00px;font-size:13.6px;color:#1c1c2e;-webkit-text-stroke:0.4px #1c1c2e;"><i class="o">1</i><i class="o">1</i></span><div class="abs" style="left:1683px;top:633px;width:62px;height:23px;background:#f9fa63"><div class="abs" style="left:1px;top:1px;right:1px;bottom:1px;background:#f0f35f"></div></div><span class="t" style="left:1710.22px;top:639.00px;font-size:13.6px;color:#1c1c2e;-webkit-text-stroke:0.4px #1c1c2e;"><i class="o">1</i></span><div class="abs" style="left:1746px;top:633px;width:61px;height:23px;background:#fff"></div><div class="abs" style="left:1808px;top:633px;width:62px;height:23px;background:#f3f3f3"></div></section>
</main>
<aside id="sidebar"><svg style="left:17px;top:13px" width="34" height="34" viewBox="0 0 34 34">
<rect width="34" height="34" rx="3.2" fill="#8dc63f"/>
<g fill="#ffe100">
<polygon points="6.2,18.2 10.6,17.2 9.6,20.2"/>
<polygon points="8.2,11.6 12.4,14.0 10.4,15.8"/>
<polygon points="13.6,9.4 15.6,12.6 13.0,13.4"/>
<polygon points="19.2,9.2 20.0,13.0 17.4,12.6"/>
<polygon points="24.6,11.4 22.9,15.4 20.9,13.8"/>
<polygon points="27.0,18.0 23.4,19.8 22.8,17.0"/>
</g>
<path d="M10.4 21 A6.2 6.6 0 0 1 22.8 21 Z" fill="#ffd200"/>
<path d="M4.2 23.0 Q17 21.2 30.2 23.0 Q17 22.4 4.2 23.0 Z" fill="#eef8d2" stroke="#eef8d2" stroke-width="0.3"/>
<path d="M7 24.8 Q17 23.6 27.4 24.8" fill="none" stroke="#c6e48e" stroke-width="0.7"/>
</svg><svg class="ic" style="left:25.10px;top:73.10px" width="26" height="19" viewBox="0 0 26 19"><circle cx="13" cy="5.2" r="3.9"/><path d="M6.6 17.9 v-2.6 a3.6 3.6 0 0 1 3.6 -3.6 h5.6 a3.6 3.6 0 0 1 3.6 3.6 v2.6 z"/><circle cx="4.6" cy="4.6" r="2.3"/><circle cx="21.4" cy="4.6" r="2.3"/><path d="M0.9 12.6 a3 3 0 0 1 3 -3 h2.6"/><path d="M25.1 12.6 a3 3 0 0 0 -3 -3 h-2.6"/></svg><svg class="ic" style="left:27.70px;top:119.00px" width="22" height="19" viewBox="0 0 22 19"><path d="M1.6 6.6 L11 1 L20.4 6.6 Z"/><path d="M3.2 15.2 H18.8 M1.2 18 H20.8"/><path d="M4.6 8.2 V14 M8.6 8.2 V14 M13.4 8.2 V14 M17.4 8.2 V14" stroke-width="1.7"/></svg><svg class="ic" style="left:27.40px;top:163.80px" width="22" height="21" viewBox="0 0 22 21"><path d="M11.2 0.9 L21 5.4 L11.2 9.7 L1.6 5.4 Z"/><path d="M5.6 8.5 L1.6 10.5 L11.2 14.9 L21 10.5 L17 8.5"/><path d="M5.6 13.6 L1.6 15.6 L11.2 20.1 L21 15.6 L17 13.6"/></svg><svg class="ic" style="left:27.70px;top:209.80px" width="21" height="21" viewBox="0 0 21 21"><circle cx="10.5" cy="10.5" r="9.3"/><path d="M10.5 5.2 V11 L13.4 13.4"/></svg><svg class="ic" style="left:28.80px;top:256.00px" width="19" height="21" viewBox="0 0 19 21"><rect x="1" y="3.2" width="17" height="16.8" rx="1.8"/><path d="M1 7.6 H18 M5.3 0.8 V3.2 M13.7 0.8 V3.2"/><path d="M7.2 11 L11.8 15.8 M11.8 11 L7.2 15.8"/></svg><svg class="ic" style="left:24.80px;top:304.90px" width="27" height="15" viewBox="0 0 27 15"><path d="M0.7 3.1 H5.7 L7.9 0.8 H19.1 L21.3 3.1 H26.3"/><path d="M4 3.1 V11.8 M23.2 3.1 V11.8"/><path d="M0.7 11.8 H5.7 L9.4 14.3 C10.4 14.6 11 14.3 11.6 13.9 C12.4 14.5 13.4 14.5 14.2 13.8 C15 14.2 16 14 16.6 13.2 L21.3 11.6 H26.3"/><path d="M13.4 0.9 L9.9 4.2 C9 5.5 10.6 7.2 12.1 6.2 L15 4.1 L20.6 9.6"/><path d="M1.3 9.4 h0.1 M25.6 9.4 h0.1" stroke-width="1.2"/></svg><svg class="ic" style="left:27.60px;top:349.30px" width="22" height="18" viewBox="0 0 22 18"><g stroke-width="1.15"><path d="M5.7 3.2 l5.3 -2.5 l5.3 2.5 v4.3 l-5.3 2.5 l-5.3 -2.5 z"/><path d="M5.7 3.2 l5.3 2.5 l5.3 -2.5 M11.0 5.7 v4.3"/><path d="M0.6 11.2 l5.3 -2.5 l5.3 2.5 v4.3 l-5.3 2.5 l-5.3 -2.5 z"/><path d="M0.6 11.2 l5.3 2.5 l5.3 -2.5 M5.8999999999999995 13.7 v4.3"/><path d="M10.8 11.2 l5.3 -2.5 l5.3 2.5 v4.3 l-5.3 2.5 l-5.3 -2.5 z"/><path d="M10.8 11.2 l5.3 2.5 l5.3 -2.5 M16.1 13.7 v4.3"/></g></svg><svg class="ic" style="left:28.80px;top:393.50px" width="19" height="22" viewBox="0 0 19 22"><rect x="1.15" y="1.25" width="16.5" height="19.5" rx="1.3"/><g stroke-width="1.2"><circle cx="5.7" cy="6" r="1.3"/><path d="M9.2 6 H15"/><path d="M4.3 10.8 L5.5 12.1 L7.4 9.8"/><path d="M9.2 11 H15"/><circle cx="5.7" cy="16" r="1.3"/><path d="M9.2 16 H15"/></g></svg><svg class="ic" style="left:26.30px;top:439.50px" width="24" height="22" viewBox="0 0 24 22"><path d="M12 11.6 V7.2 C12 3.4 9.4 1.2 5 1.2 C5 5 7.6 7.2 12 7.2 C16.4 7.2 19 5 19 1.2 C14.6 1.2 12 3.4 12 7.2"/><path d="M0.8 20.6 H17 C18 20.6 18.6 20.4 19.4 19.8 L22.8 17 C23.6 16 22.6 14.6 21.2 15.4 L17.6 17.6 H11.6 M15.6 17.6 C16.8 17.6 16.8 15.2 15.4 15.2 H10.8 C9.6 14.2 7.6 13.6 5.6 14.8 L4 16 H0.8"/></svg><svg class="ic" style="left:28.80px;top:485.50px" width="19" height="22" viewBox="0 0 19 22"><path d="M0.8 21 H18.2 M2.2 21 V2 C2.2 1.4 2.6 1 3.2 1 H15.8 C16.4 1 16.8 1.4 16.8 2 V21"/><path d="M7.6 21 V16.8 H11.4 V21"/><g fill="#fff" stroke="none"><rect x="5.4" y="4.6000000000000005" width="2.6" height="2.6"/><rect x="5.4" y="8.5" width="2.6" height="2.6"/><rect x="5.4" y="12.299999999999999" width="2.6" height="2.6"/><rect x="10.6" y="4.6000000000000005" width="2.6" height="2.6"/><rect x="10.6" y="8.5" width="2.6" height="2.6"/><rect x="10.6" y="12.299999999999999" width="2.6" height="2.6"/></g></svg><svg class="ic" style="left:26.60px;top:534.30px" width="24" height="16" viewBox="0 0 24 16"><path d="M1 8.6 L5 1.6 C5.3 1.1 5.7 0.9 6.2 0.9 H17.8 C18.3 0.9 18.7 1.1 19 1.6 L23 8.6"/><rect x="1" y="8.6" width="22" height="6.4" rx="1.5"/><path d="M16.2 11.8 H16.4 M19.4 11.8 H19.6" stroke-width="1.9"/></svg><svg class="ic" style="left:29.90px;top:577.80px" width="17" height="21" viewBox="0 0 17 21"><path d="M2.2 0.9 H10.6 L16 6.3 V18.8 C16 19.6 15.5 20.1 14.8 20.1 H2.2 C1.5 20.1 1 19.6 1 18.8 V2.2 C1 1.4 1.5 0.9 2.2 0.9 Z"/><path d="M10.6 0.9 V6.3 H16"/><path d="M3.8 4 H8 M3.8 6.6 H8" stroke-width="1.1"/><path d="M3.8 15.8 H5.6 L7.6 12 L9.6 15 L11 14 L13.2 15.8" stroke-width="1.2"/></svg><svg class="ic" style="left:28.60px;top:623.60px" width="19" height="22" viewBox="0 0 19 22"><path d="M4.2 1 V7.2 C4.2 10.2 6.6 12.2 9.6 12.2 C12.6 12.2 15 10.2 15 7.2 V1 L12.4 3.2 L9.6 1.1 L6.8 3.2 Z"/><path d="M4.2 5.7 H15" stroke-width="1.2"/><path d="M1 20.9 V19.4 C1 16.6 3.2 14.3 6 14.3 C8.2 15.3 11 15.3 13.2 14.3 C16 14.3 18.1 16.6 18.1 19.4 V20.9 Z"/></svg><svg class="ic" style="left:28.80px;top:670.30px" width="19" height="22" viewBox="0 0 19 22"><rect x="1" y="1" width="15.6" height="20" rx="1.6"/><path d="M16.6 4 H18 V8 H16.6"/><circle cx="8.8" cy="8.6" r="2.6"/></svg></aside>
<header><span class="t" style="left:102.00px;top:7.00px;font-size:23.4px;color:#fff;letter-spacing:-0.178px;">Miah Owens</span><svg style="left:233.5px;top:15px" width="11" height="6" viewBox="0 0 11 6"><polygon points="0,0 10.6,0 5.3,5.3" fill="#fff"/></svg><nav><span class="t" style="left:113.60px;top:41.00px;font-size:14.9px;color:#fff;letter-spacing:-0.283px;-webkit-text-stroke:0.15px #fff;">Personnel</span><span class="t" style="left:204.10px;top:41.00px;font-size:14.9px;color:#fff;letter-spacing:-0.299px;-webkit-text-stroke:0.15px #fff;">Basic Info</span><span class="t" style="left:292.40px;top:41.00px;font-size:14.9px;color:#fff;letter-spacing:-0.114px;-webkit-text-stroke:0.15px #fff;">Documents</span><span class="t" style="left:391.90px;top:41.00px;font-size:14.9px;color:#fff;letter-spacing:0.011px;-webkit-text-stroke:0.15px #fff;">Agreements</span><span class="t" style="left:497.70px;top:41.00px;font-size:14.9px;color:#fff;letter-spacing:0.119px;-webkit-text-stroke:0.15px #fff;">Time Off</span><span class="t" style="left:579.40px;top:41.00px;font-size:14.9px;color:#fff;letter-spacing:-0.370px;-webkit-text-stroke:0.15px #fff;">Skills</span><span class="t" style="left:637.70px;top:41.00px;font-size:14.9px;color:#fff;letter-spacing:-0.113px;-webkit-text-stroke:0.15px #fff;">Time Tracking</span><span class="t" style="left:863.60px;top:41.00px;font-size:14.9px;color:#fff;letter-spacing:-0.278px;-webkit-text-stroke:0.15px #fff;">Evaluations</span><span class="t" style="left:963.10px;top:41.00px;font-size:14.9px;color:#fff;letter-spacing:-0.154px;-webkit-text-stroke:0.15px #fff;">Contracts</span><span class="t" style="left:1051.10px;top:41.00px;font-size:14.9px;color:#fff;letter-spacing:-0.698px;-webkit-text-stroke:0.15px #fff;">Assets</span><svg style="left:1113px;top:44px" width="14" height="6" viewBox="0 0 14 6"><circle cx="1.7" cy="2.8" r="1.45" fill="#fff"/><circle cx="6.5" cy="2.8" r="1.45" fill="#fff"/><circle cx="11.3" cy="2.8" r="1.45" fill="#fff"/></svg><div class="abs" style="left:742px;top:59px;width:109px;height:3px;background:#0a84ff"></div><span class="t" style="left:754.90px;top:41.00px;font-size:14.8px;color:#fff;letter-spacing:-0.072px;-webkit-text-stroke:0.5px #fff;">Performance</span><div class="abs" style="left:738px;top:31px;width:113.6px;height:32.6px;border:2px solid #0a84ff;background:rgba(0,150,255,0.16)"></div></nav><svg class="ic" style="left:1790px;top:21px;stroke-width:1.4" width="19" height="18" viewBox="0 0 19 18"><circle cx="8.1" cy="7.5" r="6.3"/><path d="M12.7 12.1 L17.6 16.9"/></svg><svg style="left:1834px;top:20px;fill:none;stroke-linecap:round;stroke-linejoin:round" width="16" height="20" viewBox="0 0 16 20"><path d="M3.9 6.9 C3.9 2.7 12.2 2.7 12.2 6.9 C12.2 9.5 8 9.1 7.9 10.5" stroke="#fff" stroke-width="3.5"/><path d="M3.9 6.9 C3.9 2.7 12.2 2.7 12.2 6.9 C12.2 9.5 8 9.1 7.9 10.5" stroke="#32324a" stroke-width="1.0"/><circle cx="7.8" cy="15.4" r="2.2" stroke="#fff" stroke-width="1.3"/></svg><svg style="left:1865.5px;top:14.5px" width="31" height="31" viewBox="0 0 31 31">
<defs><clipPath id="av"><circle cx="15.4" cy="15.3" r="15.15"/></clipPath>
<filter id="bl" x="-20%" y="-20%" width="140%" height="140%"><feGaussianBlur stdDeviation="0.9"/></filter>
<filter id="bl2" x="-20%" y="-20%" width="140%" height="140%"><feGaussianBlur stdDeviation="0.45"/></filter></defs>
<g clip-path="url(#av)"><rect width="31" height="31" fill="#8a8f90"/>
<g filter="url(#bl)">
<rect x="-2" y="-2" width="35" height="7.2" fill="#b3aea6"/>
<rect x="-2" y="5.0" width="35" height="1.7" fill="#3b3735"/>
<rect x="-2" y="6.7" width="35" height="10" fill="#8d857d"/>
<rect x="0" y="7.2" width="4.8" height="9.6" fill="#f6f2ea"/>
<rect x="5.4" y="7.2" width="3.2" height="8" fill="#5a504a"/>
<rect x="21.6" y="7.8" width="5" height="6.4" fill="#f0c6a6"/>
<rect x="26.4" y="8.4" width="5" height="8" fill="#ece5da"/>
<rect x="-2" y="16.8" width="35" height="16" fill="#7e868a"/>
</g>
<g filter="url(#bl2)">
<path d="M9.6 21.5 C7.8 12 10.6 5.6 15.6 5.6 C21.6 5.6 24.2 10.4 24.6 16 C25.2 19.4 27.2 22.4 25.8 26.4 L21 28.6 L9.4 24 Z" fill="#2a1e22"/>
<path d="M12.4 19 H17.8 V24.4 H12.4 Z" fill="#d9a084"/>
<ellipse cx="14.9" cy="15.4" rx="4.3" ry="5.7" fill="#f3c8b0"/>
<path d="M10.3 14.2 C10.4 9.4 13 7.4 15.6 7.6 C18.6 7.8 20 10.2 19.6 14.6 C18.8 11.8 17.2 10.4 15.4 10.2 C13.2 10.2 11.2 11.6 10.3 14.2 Z" fill="#2a1e22"/>
<path d="M12.4 13.6 h1.8 M15.8 13.6 h1.8" stroke="#3a2622" stroke-width="0.7" fill="none"/><path d="M14.6 15.2 v1.4" stroke="#d39a80" stroke-width="0.6" fill="none"/><path d="M10.4 13 C9.8 16 10 19 10.8 22 L9.4 22.6 C8.6 19 8.8 15 10.4 13 Z" fill="#2a1e22"/><path d="M13.2 18.0 Q14.9 19.9 16.8 18.0 Q14.9 18.7 13.2 18.0 Z" fill="#c4101c" stroke="#c4101c" stroke-width="0.3"/>

<path d="M3.4 31 C4.4 25.8 8.6 24 11.6 23.2 L12.6 22 C14.2 23 16.4 23 18 22 L19 23.2 C22.4 24 26.4 25.8 27.4 31 Z" fill="#b0082a"/>
<path d="M21 17 C22.6 20 23.4 23.6 24.8 26.8 L21.8 27.6 C21.4 24 20.2 21.6 19.4 19.6 Z" fill="#2a1e22"/>
</g></g></svg></header>
</body></html>
